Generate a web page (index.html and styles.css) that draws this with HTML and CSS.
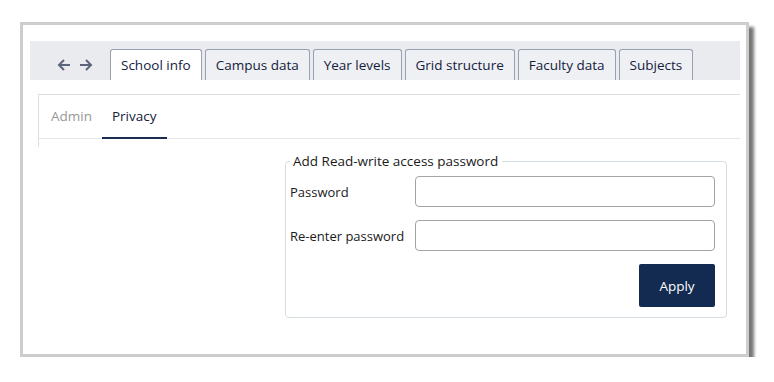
FILE: index.html
```html
<!DOCTYPE html>
<html lang="en">

<head>
  <meta charset="UTF-8">
  <title>School settings</title>
  <link rel="stylesheet" href="styles.css">
</head>

<body>
  <div class="frame">
    <div class="tabbar">
      <div class="history">
        <svg width="14" height="14" viewBox="0 0 14 14"><path d="M13 7H2M7 2L2 7l5 5" fill="none" stroke="#5d6579" stroke-width="2"/></svg>
        <svg width="14" height="14" viewBox="0 0 14 14"><path d="M1 7h11M7 2l5 5-5 5" fill="none" stroke="#5d6579" stroke-width="2"/></svg>
      </div>
      <div class="tab active">School info</div>
      <div class="tab">Campus data</div>
      <div class="tab">Year levels</div>
      <div class="tab">Grid structure</div>
      <div class="tab">Faculty data</div>
      <div class="tab">Subjects</div>
    </div>

    <div class="panel">
      <div class="subtabs">
        <div class="subtab">Admin</div>
        <div class="subtab current">Privacy</div>
      </div>
    </div>

    <div class="content">
      <fieldset class="pwbox">
        <legend>Add Read-write access password</legend>
        <div class="row">
          <label>Password</label>
          <input type="password">
        </div>
        <div class="row">
          <label>Re-enter password</label>
          <input type="password">
        </div>
        <div class="actions">
          <button>Apply</button>
        </div>
      </fieldset>
    </div>
  </div>
</body>

</html>
```

FILE: styles.css
```css
body {
  margin: 0;
  background-color: #fff;
  font-family: 'Open Sans', 'Noto Sans', sans-serif;
  font-size: 13px;
  color: #1a1a1a;
}

.frame {
  margin: 22px 0 0 20px;
  width: 729px;
  height: 335px;
  box-sizing: border-box;
  border: 3px solid #cdcdcd;
  background-color: #fff;
  box-shadow: 5px 5px 3px #777;
  padding: 16px 6px 0 7px;
}

.tabbar {
  display: flex;
  align-items: flex-end;
  height: 39px;
  background-color: #e9ebee;
  gap: 3px;
}

.history {
  display: flex;
  gap: 8px;
  width: 65px;
  height: 31px;
  padding-left: 12px;
  align-items: center;
  justify-content: center;
}

.tab {
  height: 31px;
  box-sizing: border-box;
  padding: 0 10px;
  display: flex;
  align-items: center;
  border: 1px solid #98a0b2;
  border-bottom: none;
  border-radius: 3px 3px 0 0;
  background-color: #eef0f3;
  color: #14213e;
  font-size: 13.5px;
  font-weight: 500;
}

.tab.active {
  background-color: #fff;
}

.panel {
  margin: 14px 0 0 8px;
  height: 52px;
  border-top: 1px solid #dcdee2;
  border-left: 1px solid #dcdee2;
}

.subtabs {
  display: flex;
  height: 43px;
  border-bottom: 1px solid #e3e5e8;
  padding-left: 2px;
}

.subtab {
  padding: 0 10px;
  display: flex;
  align-items: center;
  color: #979797;
  font-size: 13.5px;
  font-weight: 500;
  margin-bottom: -1px;
  border-bottom: 2px solid transparent;
}

.subtab.current {
  color: #14213e;
  border-bottom-color: #1a2c50;
}

.content {
  margin-top: 5px;
  padding-left: 255px;
}

.pwbox {
  margin: 0;
  width: 442px;
  height: 166px;
  box-sizing: border-box;
  border: 1px solid #d3dde2;
  border-radius: 4px;
  padding: 6px 11px 0 4px;
}

.pwbox legend {
  margin-left: 0;
  padding: 0 4px 0 3px;
  font-size: 13.5px;
  font-weight: 500;
}

.row {
  display: flex;
  align-items: center;
  margin-bottom: 13px;
  font-weight: 500;
}

.row label {
  width: 125px;
}

.row input {
  width: 300px;
  height: 31px;
  box-sizing: border-box;
  border: 1px solid #a3a3a3;
  border-radius: 4px;
  margin: 0;
}

.actions {
  display: flex;
  justify-content: flex-end;
}

button {
  width: 76px;
  height: 43px;
  border: none;
  border-radius: 2px;
  background-color: #132b50;
  color: #fff;
  font-family: 'Open Sans', 'Noto Sans', sans-serif;
  font-size: 13.5px;
  font-weight: 500;
}
```
